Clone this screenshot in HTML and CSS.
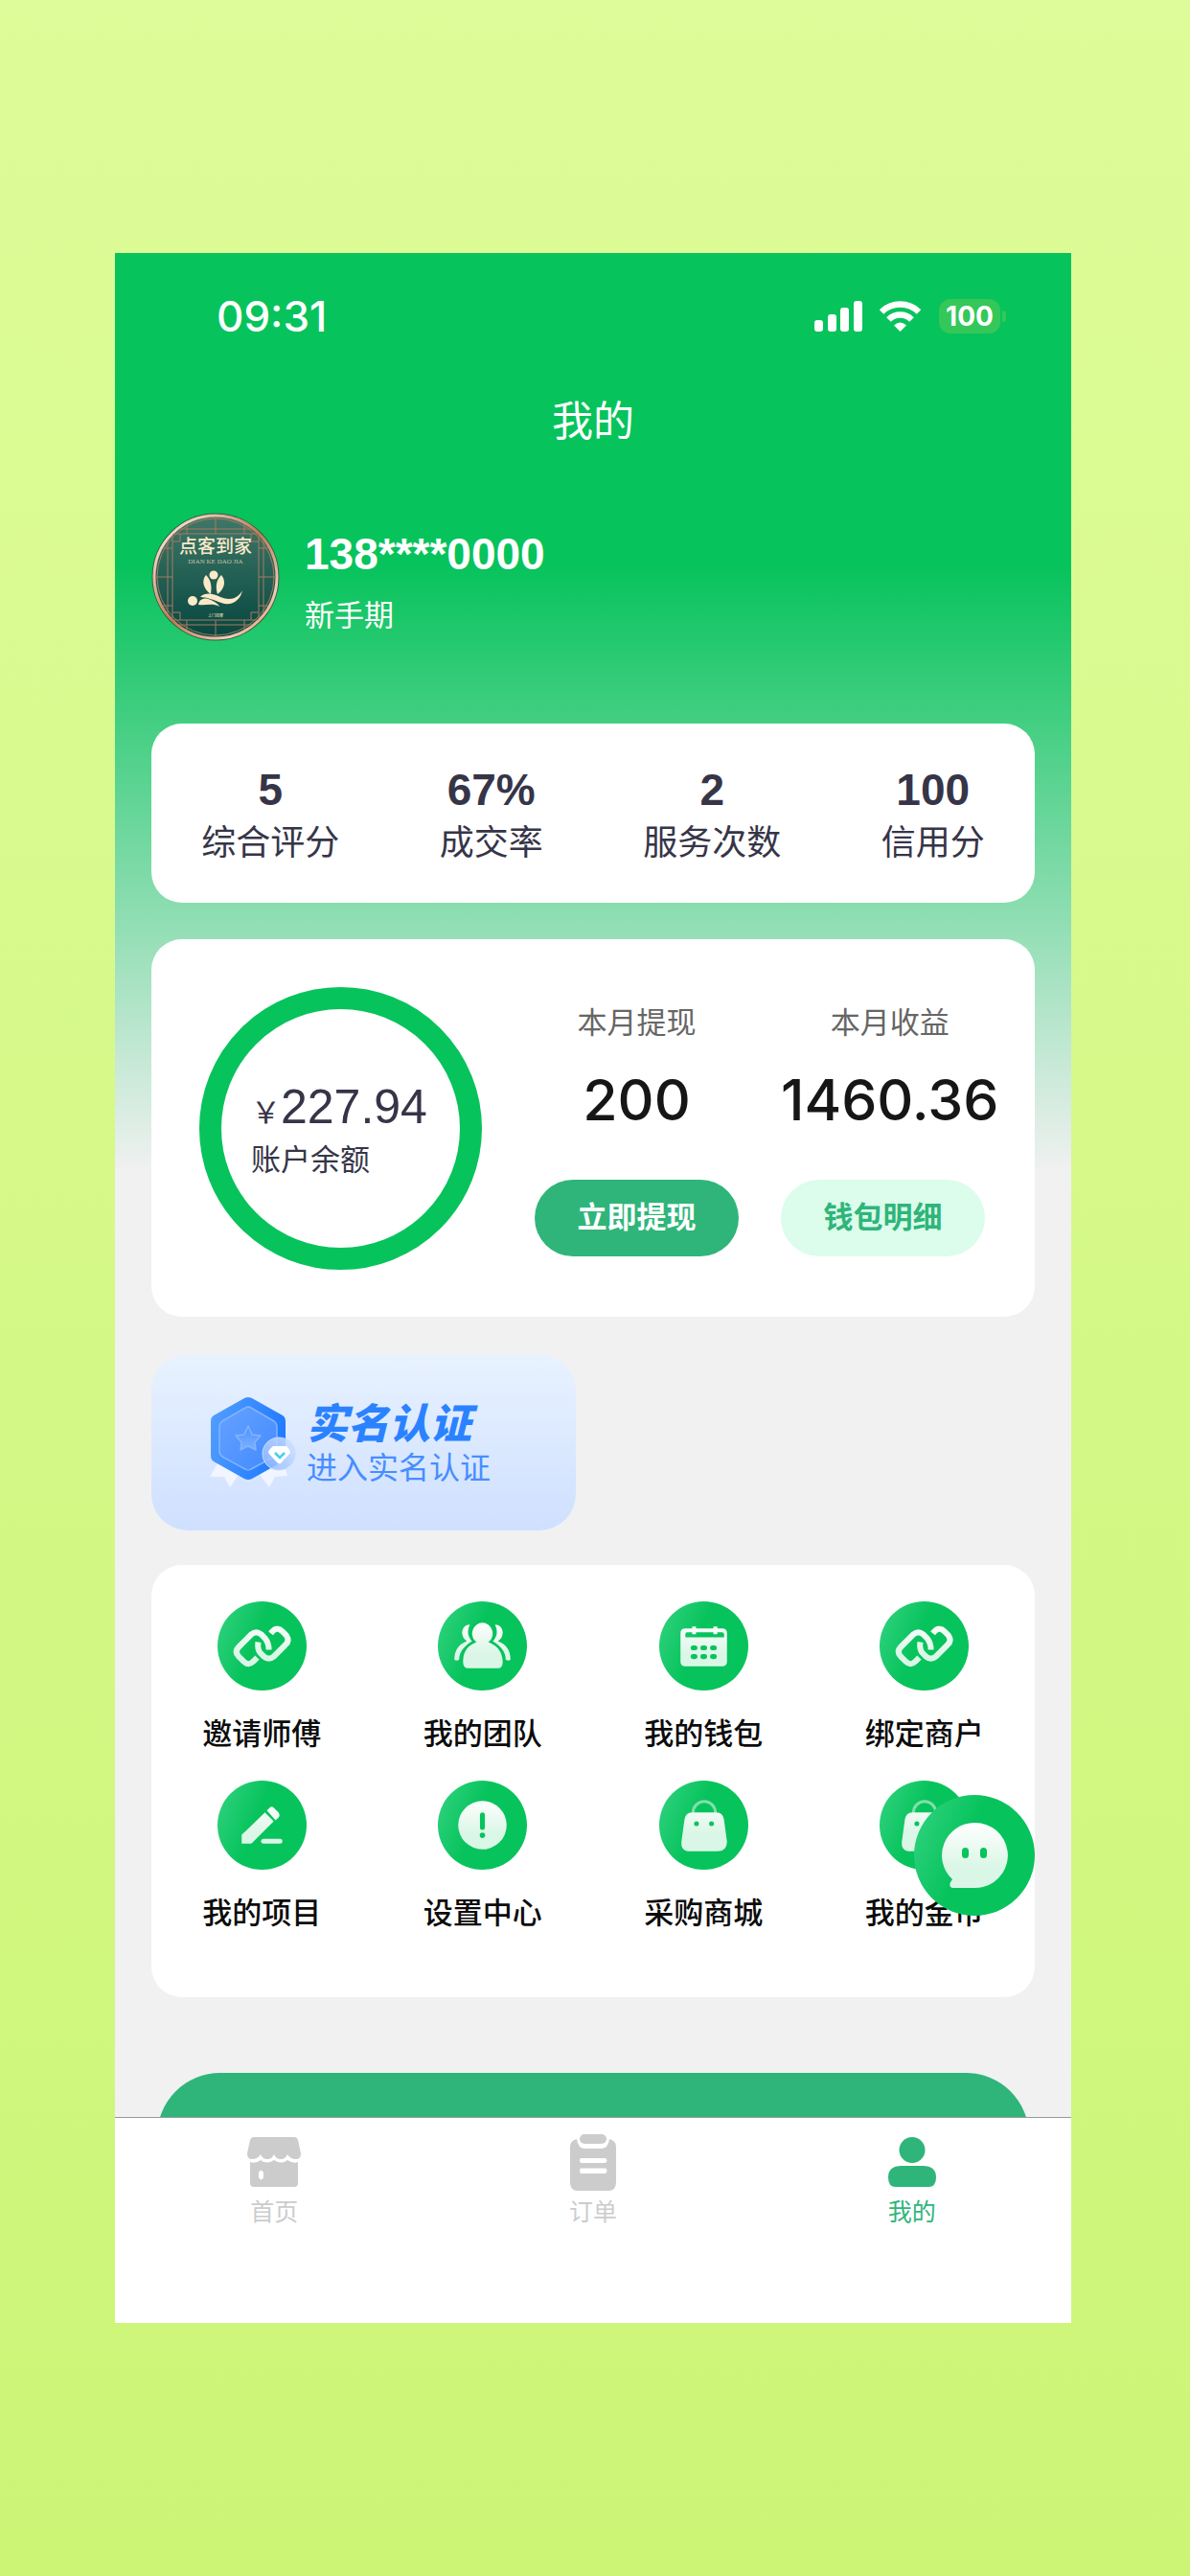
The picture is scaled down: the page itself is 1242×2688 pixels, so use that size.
FILE: index.html
```html
<!DOCTYPE html>
<html lang="zh-CN">
<head>
<meta charset="utf-8">
<meta name="viewport" content="width=device-width, initial-scale=1">
<title>我的</title>
<link rel="stylesheet" href="styles.css">
</head>
<body>
<svg class="defs" width="0" height="0" aria-hidden="true">
  <defs>
    <linearGradient id="disc" x1="0" y1="0.3" x2="1" y2="0.7">
      <stop offset="0" stop-color="#2bd07a"/><stop offset="0.42" stop-color="#07c35c"/>
    </linearGradient>
    <linearGradient id="ink" gradientUnits="userSpaceOnUse" x1="0" y1="20" x2="0" y2="70">
      <stop offset="0" stop-color="#fff"/><stop offset="0.7" stop-color="#daf6e6"/>
    </linearGradient>
    <symbol id="i-link" viewBox="0 0 92 92">
      <circle cx="46" cy="46" r="46" fill="url(#disc)"/>
      <g fill="none" stroke="url(#ink)" stroke-width="6">
        <path d="M41 58 L37 62 Q32 67 27 62 L22 57 Q17 52 22 47 L35 34 Q40 30 45 34 L49 38 Q53 43 53 50"/>
        <path d="M55 33 Q61 25 67 31 L71 35 Q75 41 70 45 L58 57 Q53 61 48 57 L44 53 Q41 49 42 42"/>
      </g>
    </symbol>
    <symbol id="i-bag" viewBox="0 0 92 92">
      <circle cx="46" cy="46" r="46" fill="url(#disc)"/>
      <path d="M35 34V33a11 11 0 0 1 23 0v1" fill="none" stroke="#7fe0aa" stroke-width="3"/>
      <path d="M34 33H59Q66 33 67 41L70 63Q70 73 60 73H32Q22 73 23 63L26 41Q27 33 34 33Z" fill="url(#ink)"/>
      <circle cx="38.500" cy="44.500" r="2.500" fill="#07c35c"/><circle cx="54" cy="44.500" r="2.500" fill="#07c35c"/>
    </symbol>
  </defs>
</svg>

<main class="phone">
  <div class="screen">
    <header class="status">
      <time class="clock">09:31</time>
      <div class="signals">
        <svg width="50" height="32" viewBox="0 0 50 32" fill="#fff" aria-label="信号">
          <rect x="0" y="20" width="9" height="12" rx="3"/><rect x="14" y="14" width="9" height="18" rx="3"/><rect x="27" y="7" width="9" height="25" rx="3"/><rect x="41" y="0" width="9" height="32" rx="3"/>
        </svg>
        <svg class="wifi" width="43" height="32" viewBox="0 0 43 32" fill="#fff" aria-label="无线网络">
          <g fill="none" stroke="#fff" stroke-width="6.500"><path d="M2 11.500A28 28 0 0 1 41 11.500"/><path d="M9.500 19.500A17 17 0 0 1 33.500 19.500"/></g>
          <path d="M15 25.500Q21.500 19.500 28 25.500L21.500 32Z"/>
        </svg>
        <span class="battery">100</span><i class="battery-tip"></i>
      </div>
    </header>
    <h1 class="title">我的</h1>

    <section class="profile">
      <svg class="avatar" viewBox="0 0 134 134" role="img" aria-label="点客到家">
        <defs>
          <linearGradient id="av" x1="0" y1="0" x2="0" y2="1"><stop offset="0" stop-color="#3f7868"/><stop offset="1" stop-color="#06463f"/></linearGradient>
          <linearGradient id="rim" x1="0" y1="0" x2="1" y2="1"><stop offset="0" stop-color="#c97a4b"/><stop offset="0.15" stop-color="#f3d6c6"/><stop offset="0.5" stop-color="#c07a50"/><stop offset="0.8" stop-color="#f0cdb8"/><stop offset="1" stop-color="#d97835"/></linearGradient>
          <clipPath id="avc"><circle cx="67" cy="67" r="63"/></clipPath>
        </defs>
        <circle cx="67" cy="67" r="66.500" fill="#315f4a"/>
        <circle cx="67" cy="67" r="64" fill="url(#av)" stroke="url(#rim)" stroke-width="3"/>
        <g clip-path="url(#avc)" fill="none" stroke="#a87b60" stroke-width="1">
          <path d="M22 22H112V112H22ZM17 17V117M117 17V117M12 37H22M12 97H22M112 37H122M112 97H122M37 12V22M97 12V22M37 112V122M97 112V122M67 3V22M67 112V131M3 67H22M112 67H131M22 30H30V22M104 22V30H112M22 104H30V112M104 112V104H112M20 17H115M20 117H115"/>
          <circle cx="67" cy="67" r="61"/>
        </g>
        <text x="67" y="42" class="av-name">点客到家</text>
        <text x="67" y="53" class="av-latin">DIAN KE DAO JIA</text>
        <g fill="#fbe9c8">
          <circle cx="65" cy="65" r="4.500"/><circle cx="43" cy="92" r="5"/>
          <path d="M57 65C52 71 54 79 62 85C63 78 63 71 57 65ZM73 65C78 71 77 79 69 85C67 78 67 71 73 65Z"/>
          <path d="M51 88C56 83 64 84 72 88C82 92 90 90 95 81C93 92 83 98 73 94C65 91 57 88 51 88Z"/>
          <path d="M49 96C50 89 57 88 62 91C66 93 70 95 71 98C64 94 58 97 49 96Z"/>
        </g>
        <text x="67" y="109" class="av-tag">上门按摩</text>
      </svg>
      <div class="who">
        <strong class="number">138****0000</strong>
        <span class="level">新手期</span>
      </div>
    </section>

    <section class="card stats">
      <div class="stat"><strong>5</strong><span>综合评分</span></div>
      <div class="stat"><strong>67%</strong><span>成交率</span></div>
      <div class="stat"><strong>2</strong><span>服务次数</span></div>
      <div class="stat"><strong>100</strong><span>信用分</span></div>
    </section>

    <section class="card wallet">
      <div class="ring">
        <div class="balance">
          <div class="sum"><span class="yen">&#xFFE5;</span>227.94</div>
          <div class="small">账户余额</div>
        </div>
      </div>
      <div class="money">
        <span class="caption">本月提现</span>
        <span class="amount">200</span>
        <button class="pill pill-main" type="button">立即提现</button>
      </div>
      <div class="money">
        <span class="caption">本月收益</span>
        <span class="amount">1460.36</span>
        <button class="pill pill-soft" type="button">钱包明细</button>
      </div>
    </section>

    <a class="verify" href="#verify">
      <svg class="badge" viewBox="0 0 92 96" aria-hidden="true">
        <defs>
          <linearGradient id="hx" x1="0" y1="0" x2="1" y2="0.3"><stop offset="0" stop-color="#55a0ff"/><stop offset="1" stop-color="#227bff"/></linearGradient>
          <linearGradient id="hi" x1="0" y1="0" x2="1" y2="1"><stop offset="0" stop-color="#65a2ff"/><stop offset="1" stop-color="#428aff"/></linearGradient>
          <linearGradient id="st" x1="0" y1="0" x2="0" y2="1"><stop offset="0" stop-color="#4b91ff"/><stop offset="1" stop-color="#7eb1ff"/></linearGradient>
          <linearGradient id="orb" x1="0" y1="1" x2="1" y2="0"><stop offset="0" stop-color="#8cb7ff"/><stop offset="1" stop-color="#d6e5ff"/></linearGradient>
        </defs>
        <path d="M9 70L31 82L22 95L16 84L1 84Z" fill="#f0f5ff"/><path d="M73 70L53 82L63 95L69 84L82 83L80 76Z" fill="#f0f5ff"/>
        <path d="M37 2Q41 0 45 2L77 20Q80 22 80 26V62Q80 66 77 68L45 86Q41 88 37 86L5 68Q2 66 2 62V26Q2 22 5 20Z" fill="url(#hx)"/>
        <path d="M38 12Q41 10 44 12L68 26Q71 28 71 32V57Q71 61 68 63L44 76Q41 78 38 76L14 63Q11 61 11 57V32Q11 28 14 26Z" fill="url(#hi)" stroke="#82b4ff" stroke-width="1.500"/>
        <path d="M41 31L45 40L54 41L48 48L49 56L41 52L33 56L34 48L28 41L37 40Z" fill="url(#st)" stroke="#83b4ff" stroke-width="1.500" stroke-linejoin="round"/>
        <circle cx="73" cy="60" r="17" fill="url(#orb)" fill-opacity="0.850" stroke="#c6dbff" stroke-width="1"/>
        <path d="M67 52H81Q85 56 85 59L75 70Q73 71 71 69L62 59Q62 56 67 52Z" fill="#fff"/><path d="M69 59L74 64L79 59" fill="none" stroke="#46cdf3" stroke-width="2.500"/>
      </svg>
      <span class="verify-text"><b>实名认证</b><span>进入实名认证</span></span>
    </a>

    <nav class="card menu">
      <a href="#invite"><svg class="disc"><use href="#i-link"/></svg>邀请师傅</a>
      <a href="#team"><svg class="disc" viewBox="0 0 92 92"><circle cx="46" cy="46" r="46" fill="url(#disc)"/><g fill="url(#ink)"><path d="M33 24Q26 24 25 32Q25 38 30 41Q17 46 17 60Q19 62 22 60Q22 48 36 42Q28 34 33 24ZM59 24Q66 24 67 32Q67 38 62 41Q75 46 75 60Q73 62 70 60Q70 48 56 42Q64 34 59 24Z"/><path d="M46 22a10.500 11 0 0 1 6 20q14 5 15 20 0 7-5 7H31q-5 0-5-7 0-15 14-20A10.500 11 0 0 1 46 22Z" stroke="#07c35c" stroke-width="5" paint-order="stroke"/></g></svg>我的团队</a>
      <a href="#wallet"><svg class="disc" viewBox="0 0 92 92"><circle cx="46" cy="46" r="46" fill="url(#disc)"/><path fill="url(#ink)" fill-rule="evenodd" d="M27 28H34V26h4v2H56V26h4v2H65Q70 28 70 33V62Q70 67 65 67H27Q22 67 22 62V33Q22 28 27 28ZM27 37H67V34Q67 32 65 32H60V34H56V32H38V34H34V32H29Q27 32 27 34Z"/><g stroke="#07c35c" stroke-width="5" stroke-linecap="round"><path d="M35 48h2M45 48h2M55 48h2M35 57h2M45 57h2M55 57h2"/></g></svg>我的钱包</a>
      <a href="#merchant"><svg class="disc"><use href="#i-link"/></svg>绑定商户</a>
      <a href="#projects"><svg class="disc" viewBox="0 0 92 92"><circle cx="46" cy="46" r="46" fill="url(#disc)"/><g fill="url(#ink)"><path d="M49 33L58 42L35 65H25V56ZM51 31L54 28Q56 26 58 28L63 33Q65 36 63 38L60 41Z"/><rect x="45" y="60" width="22" height="5" rx="2.500"/></g></svg>我的项目</a>
      <a href="#settings"><svg class="disc" viewBox="0 0 92 92"><circle cx="46" cy="46" r="46" fill="url(#disc)"/><circle cx="46" cy="46" r="25" fill="url(#ink)"/><rect x="43.500" y="33" width="5" height="18" rx="2.500" fill="#07c35c"/><circle cx="46" cy="56.500" r="2.800" fill="#07c35c"/></svg>设置中心</a>
      <a href="#mall"><svg class="disc"><use href="#i-bag"/></svg>采购商城</a>
      <a href="#coins"><svg class="disc"><use href="#i-bag"/></svg>我的金币</a>
      <button class="chat" type="button" aria-label="客服">
        <svg viewBox="0 0 126 126"><circle cx="63" cy="63" r="63" fill="url(#disc)"/><path d="M63 29a34 34 0 0 1 9 67Q68 97 63 97H40Q36 96 38 91L40 88A34 34 0 0 1 63 29Z" fill="url(#chat-ink)"/><defs><linearGradient id="chat-ink" x1="0" y1="0" x2="0" y2="1"><stop offset="0" stop-color="#fff"/><stop offset="0.700" stop-color="#daf6e6"/></linearGradient></defs><rect x="50" y="55" width="7" height="11" rx="3.500" fill="#07c35c"/><rect x="69" y="55" width="7" height="11" rx="3.500" fill="#07c35c"/></svg>
      </button>
    </nav>

    <button class="bottom-action" type="button" aria-label="更多"></button>
  </div>

  <nav class="tabs">
    <a href="#home"><svg viewBox="0 0 60 60" fill="currentColor"><path d="M9 4H51Q54 4 55 7L58 21Q58 27 53 27Q47 27 44 22Q42 27 37 27Q32 27 30 22Q28 27 23 27Q18 27 16 22Q13 27 7 27Q2 27 2 21L5 7Q6 4 9 4Z"/><path fill-rule="evenodd" d="M5 30Q11 32 16 28Q22 33 30 28Q38 33 44 28Q50 32 55 30V52Q55 56 51 56H9Q5 56 5 52ZM14 41V46Q16.500 51 19 46V41Q16.500 36 14 41Z"/></svg>首页</a>
    <a href="#orders"><svg viewBox="0 0 60 60" fill="currentColor"><rect x="16" y="1" width="28" height="10" rx="5"/><path fill-rule="evenodd" d="M13 6Q14 16 22 16H38Q46 16 47 6Q54 8 54 14V51Q54 60 46 60H14Q6 60 6 51V14Q6 8 13 6ZM17 26Q15 28.500 17 31H43Q46 28.500 43 26ZM17 36.500Q15 39 17 42H43Q46 39 43 36.500Z"/></svg>订单</a>
    <a class="on" href="#mine" aria-current="page"><svg viewBox="0 0 60 60" fill="currentColor"><circle cx="30" cy="17.500" r="13.500"/><path d="M19 34H41Q55 34 55 46Q55 56 47 56H13Q5 56 5 46Q5 34 19 34Z"/></svg>我的</a>
  </nav>
</main>
</body>
</html>
```

FILE: styles.css
```css
* { box-sizing: border-box; }

body {
  margin: 0;
  padding: 264px 124px 264px 120px;
  background: linear-gradient(#defc99, #ccf576);
  font-family: "Liberation Sans", "Noto Sans CJK SC", sans-serif;
  color: #363548;
}

a { color: inherit; text-decoration: none; }
button { border: 0; padding: 0; font: inherit; cursor: pointer; }
.defs { position: absolute; }

.phone {
  display: flex;
  flex-direction: column;
  height: calc(100vh - 528px);
  background: #fff;
}

/* The content scrolls under the tab bar, which stays at the bottom. */
.screen {
  flex: 1;
  min-height: 0;
  overflow-y: auto;
  scrollbar-width: none;
  padding: 0 38px;
  background: linear-gradient(#07c35c 326px, #f1f1f1 960px);
}

.status {
  display: flex;
  justify-content: space-between;
  align-items: center;
  height: 132px;
  padding: 0 30px 0 68px;
  font-family: Inter, sans-serif;
  color: #fff;
}
.clock { font-size: 44px; font-weight: 500; }
.signals { display: flex; align-items: center; }
.wifi { margin: 0 19px 0 18px; }
.battery {
  width: 64px;
  border-radius: 12px;
  background: #35c759;
  font-size: 28px;
  font-weight: 700;
  line-height: 36px;
  text-align: center;
}
.battery-tip {
  width: 4px;
  height: 12px;
  margin-left: 2px;
  border-radius: 0 4px 4px 0;
  background: #35c759;
}

.title {
  margin: 0;
  color: #fff;
  font-size: 43px;
  font-weight: 400;
  line-height: 88px;
  text-align: center;
}

.profile { display: flex; gap: 26px; padding: 51px 0 86px; color: #fff; }
.avatar { width: 134px; height: 134px; }
.av-name { fill: #fbe9c8; font: 500 19px "Noto Sans CJK SC", sans-serif; text-anchor: middle; }
.av-latin { fill: #c9c3a3; font: 7px "Liberation Serif", serif; text-anchor: middle; }
.av-tag { fill: #fbe9c8; font: 4px "Noto Sans CJK SC", sans-serif; text-anchor: middle; }
.who { display: flex; flex-direction: column; padding-top: 17px; }
.number { font-size: 46px; line-height: 52px; }
.level { margin-top: 19px; font-size: 31px; line-height: 40px; }

.card { border-radius: 32px; background: #fff; }

.stats { display: flex; justify-content: space-around; padding: 41px 0 34px; }
.stat { display: flex; flex-direction: column; align-items: center; }
.stat strong { font-size: 46px; line-height: 56px; }
.stat span { font-size: 36px; line-height: 56px; }

.wallet { display: flex; margin-top: 38px; padding: 50px 38px 49px 50px; }
.ring {
  display: flex;
  flex: none;
  align-items: center;
  width: 295px;
  height: 295px;
  padding: 6px 0 0 31px;
  border: 23px solid #07c35c;
  border-radius: 50%;
}
.balance { white-space: nowrap; }
.sum { font-size: 50px; line-height: 60px; }
.yen { font: 31px "Noto Sans CJK SC", sans-serif; line-height: 40px; }
.small { font-size: 31px; line-height: 52px; }
.money { display: flex; flex-direction: column; align-items: center; margin-left: 55px; }
.money + .money { margin-left: 44px; }
.caption { color: #666; font-size: 31px; line-height: 76px; }
.amount { color: #161616; font: 500 59px "Inter", sans-serif; line-height: 84px; }
.pill {
  align-self: flex-start;
  width: 213px;
  height: 80px;
  margin-top: 41px;
  padding-bottom: 8px;
  border-radius: 40px;
  font-size: 31px;
  font-weight: 700;
}
.pill-main { background: #2fb57a; color: #fff; }
.pill-soft { background: #dcfdec; color: #2fb57a; }

.verify {
  display: flex;
  align-items: center;
  width: 48%;
  height: 184px;
  margin-top: 39px;
  padding-left: 60px;
  border-radius: 38px;
  background: linear-gradient(#e8f2ff, #cfe0ff);
}
.badge { width: 92px; height: 96px; }
.verify-text { display: flex; flex-direction: column; padding: 10px 0 0 10px; color: #478eff; }
.verify-text b { color: #2b82ff; font-size: 43px; font-weight: 900; font-style: italic; line-height: 44px; }
.verify-text span { font-size: 32px; line-height: 48px; }

.menu {
  position: relative;
  display: grid;
  grid-template-columns: repeat(4, 1fr);
  row-gap: 26px;
  margin-top: 36px;
  padding: 38px 0 65px;
}
.menu a {
  display: flex;
  flex-direction: column;
  align-items: center;
  gap: 24px;
  color: #0c0c0c;
  font-size: 31px;
  font-weight: 500;
  line-height: 44px;
}
.disc { width: 93px; height: 93px; }
.chat {
  position: absolute;
  right: 0;
  bottom: 85px;
  width: 126px;
  height: 126px;
  border-radius: 50%;
  background: none;
}
.chat svg { display: block; }

.bottom-action {
  display: block;
  width: calc(100% - 12px);
  height: 132px;
  margin: 79px auto 0;
  border-radius: 66px;
  background: #2fb57a;
}

.tabs {
  display: grid;
  flex: none;
  grid-template-columns: repeat(3, 1fr);
  height: 215px;
  padding-top: 16px;
  border-top: 1px solid #999;
}
.tabs a {
  display: flex;
  flex-direction: column;
  align-items: center;
  gap: 4px;
  color: #ccc;
  font-size: 25px;
  line-height: 36px;
}
.tabs svg { width: 60px; height: 60px; }
.tabs .on { color: #2fb57a; }
```
